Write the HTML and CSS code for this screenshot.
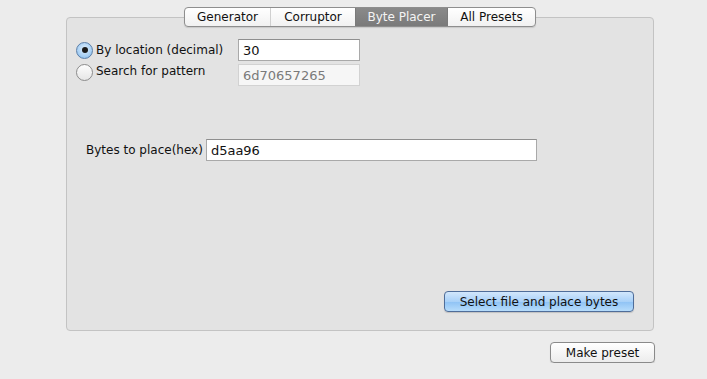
FILE: index.html
```html
<!DOCTYPE html>
<html lang="en">
<head>
    <meta charset="UTF-8">
    <title>Byte Placer</title>
    <link rel="stylesheet" href="styles.css">
</head>
<body>
    <div class="window">
        <div class="tabs">
            <div class="tab">Generator</div>
            <div class="tab">Corruptor</div>
            <div class="tab active">Byte Placer</div>
            <div class="tab">All Presets</div>
        </div>

        <div class="panel">
            <div class="mode-grid">
                <label class="radio-row">
                    <span class="radio checked"></span>
                    <span>By location (decimal)</span>
                </label>
                <div class="field">30</div>
                <label class="radio-row">
                    <span class="radio"></span>
                    <span>Search for pattern</span>
                </label>
                <div class="field disabled">6d70657265</div>
            </div>

            <div class="bytes-row">
                <span class="bytes-label">Bytes to place(hex)</span>
                <div class="field wide">d5aa96</div>
            </div>

            <div class="panel-actions">
                <button class="btn primary">Select file and place bytes</button>
            </div>
        </div>

        <div class="footer">
            <button class="btn">Make preset</button>
        </div>
    </div>
</body>
</html>
```

FILE: styles.css
```css
* {
    margin: 0;
    padding: 0;
    box-sizing: border-box;
}

body {
    font-family: 'DejaVu Sans', 'Noto Sans', sans-serif;
    font-size: 12px;
    background: #ececec;
    color: #111;
}

.window {
    display: flex;
    flex-direction: column;
    padding: 7px 53px 0 66px;
}

/* segmented tab control, sits on the panel's top border */
.tabs {
    display: flex;
    align-self: center;
    height: 20px;
    margin-bottom: -10px;
    border: 1px solid #8e8e8e;
    border-radius: 4px;
    background: linear-gradient(#ffffff, #f1f1f1);
    box-shadow: 0 1px 1px rgba(0, 0, 0, 0.12);
    position: relative;
    z-index: 1;
    overflow: hidden;
}

.tab {
    display: flex;
    align-items: center;
    justify-content: center;
    height: 100%;
    border-left: 1px solid #d0d0d0;
}

.tab:first-child { border-left: none; width: 85px; }
.tab:nth-child(2) { width: 85px; }
.tab:nth-child(3) { width: 92px; }
.tab:nth-child(4) { width: 88px; border-left-color: #7a7a7a; }

.tab.active {
    background: linear-gradient(#8a8a8a, #7a7a7a);
    color: #f4f4f4;
    border-left-color: #7a7a7a;
}

.panel {
    display: flex;
    flex-direction: column;
    height: 314px;
    background: #e3e3e3;
    border: 1px solid #c3c3c3;
    border-radius: 4px;
    padding: 21px 19px 18px 9px;
}

.mode-grid {
    display: grid;
    grid-template-columns: 162px 122px;
    row-gap: 3px;
    align-items: center;
}

.radio-row {
    display: flex;
    align-items: center;
    gap: 3px;
    height: 22px;
}

.radio-row:nth-of-type(2) {
    align-items: flex-start;
    padding-top: 0;
}

.radio {
    width: 17px;
    height: 17px;
    border-radius: 50%;
    border: 1px solid #8c8c8c;
    background: linear-gradient(#fdfdfd, #e6e6e6);
    display: flex;
    align-items: center;
    justify-content: center;
}

.radio.checked {
    border-color: #5c7fa8;
    background: radial-gradient(circle at 50% 40%, #e2f0fd 0%, #a8d0f4 60%, #7ab3e6 100%);
}

.radio.checked::after {
    content: '';
    width: 6px;
    height: 6px;
    border-radius: 50%;
    background: #1b1b1b;
}

.field {
    height: 22px;
    background: #fff;
    border: 1px solid #a9a9a9;
    border-top-color: #8f8f8f;
    padding: 0 4px;
    display: flex;
    align-items: center;
    font-size: 13px;
}

.field.disabled {
    background: #f6f6f6;
    border-color: #d2d2d2;
    color: #7a7a7a;
}

.bytes-row {
    display: flex;
    align-items: center;
    gap: 3px;
    margin-top: 53px;
    padding-left: 10px;
}

.field.wide {
    width: 331px;
}

.panel-actions {
    margin-top: auto;
    display: flex;
    justify-content: flex-end;
}

.btn {
    font-family: inherit;
    font-size: 12px;
    height: 21px;
    border: 1px solid #8a8a8a;
    border-radius: 4px;
    background: linear-gradient(#ffffff, #ececec);
    box-shadow: 0 1px 1px rgba(0, 0, 0, 0.15);
    color: #111;
}

.btn.primary {
    width: 190px;
    border-color: #4f6d99;
    background: linear-gradient(#d2e7fc 0%, #a9d1f8 50%, #8ec2f5 51%, #b6dcfb 100%);
}

.footer {
    display: flex;
    justify-content: flex-end;
    margin-top: 11px;
}

.footer .btn {
    width: 105px;
    margin-right: -1px;
}
```
